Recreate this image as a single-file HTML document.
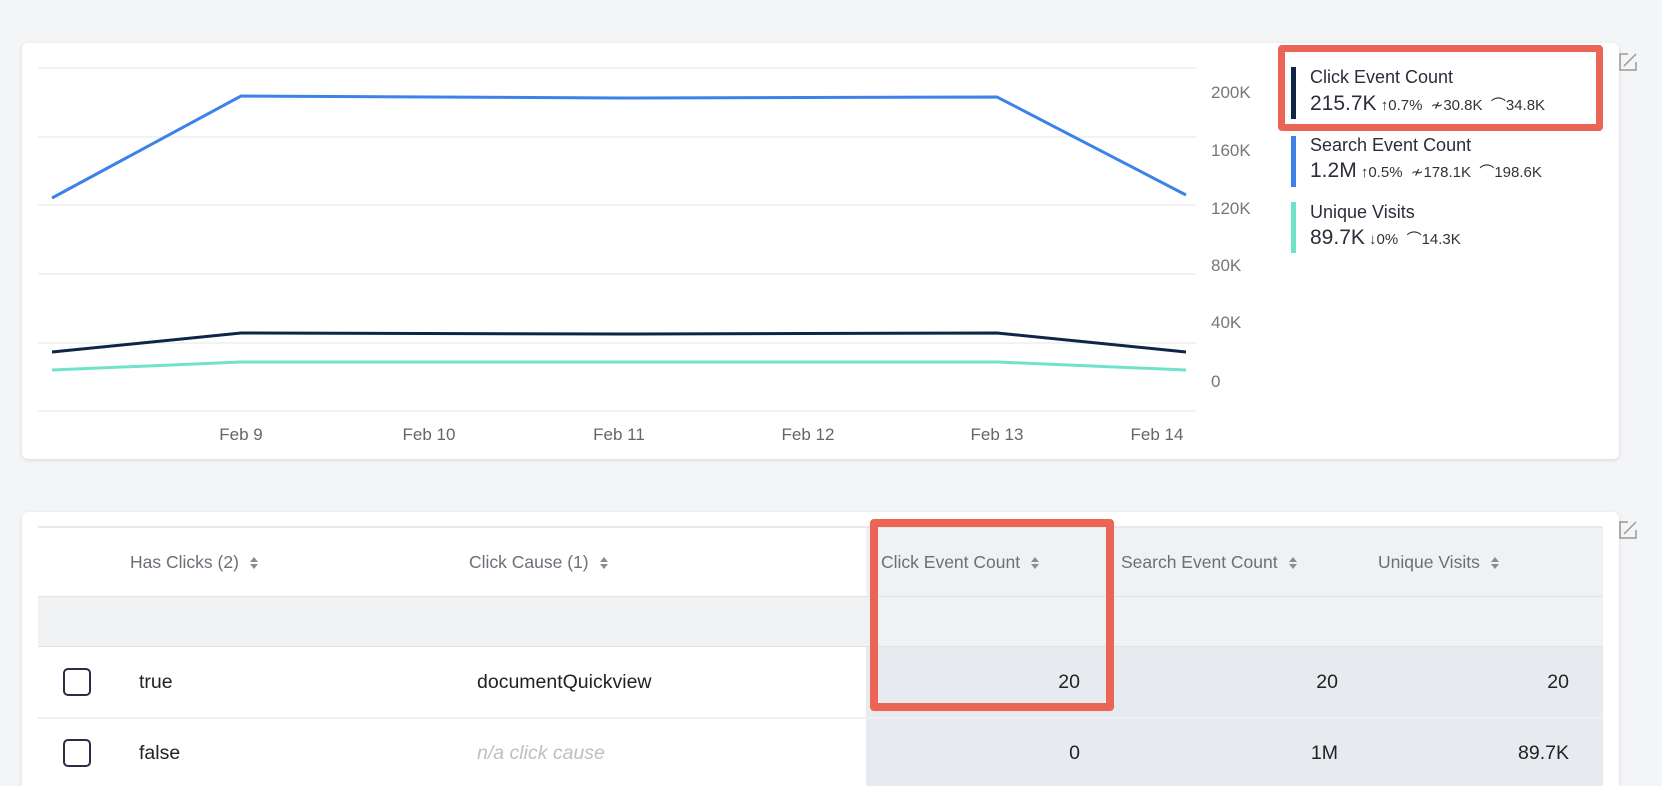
<!DOCTYPE html>
<html style="width:1662px;height:786px;overflow:hidden"><head><meta charset="utf-8"><style>
*{box-sizing:border-box;margin:0;padding:0}
body{width:1662px;height:786px;background:#f4f5f7;font-family:"Liberation Sans",sans-serif;position:relative;overflow:hidden;color:#333}
.card{position:absolute;background:#fff;border-radius:6px;box-shadow:0 1px 4px rgba(0,0,0,.12)}
.abs{position:absolute;white-space:nowrap}
.yl{position:absolute;left:1211px;font-size:17px;color:#777}
.xl{position:absolute;top:425px;font-size:17px;color:#666;transform:translateX(-50%)}
.lt{font-size:18px;color:#2a2d3a}
.lv{font-size:21px;color:#2a2d3a}
.ls{font-size:15px;color:#333}
.hd{position:absolute;top:552px;font-size:17.5px;color:#6b6f78}
.sort{display:inline-block;margin-left:10px;vertical-align:middle;width:10px}
.cell{position:absolute;font-size:19.5px;color:#222}
.cb{position:absolute;left:63px;width:28px;height:28px;border:2.5px solid #2b2c48;border-radius:5px}
</style></head><body>
<div class="card" style="left:22px;top:43px;width:1597px;height:416px"></div>
<svg class="abs" style="left:0;top:0" width="1662" height="786">
<g stroke="#eeeeee" stroke-width="1.5">
<line x1="38" y1="68" x2="1196" y2="68"/><line x1="38" y1="137" x2="1196" y2="137"/><line x1="38" y1="205" x2="1196" y2="205"/><line x1="38" y1="274" x2="1196" y2="274"/><line x1="38" y1="343" x2="1196" y2="343"/><line x1="38" y1="411" x2="1196" y2="411"/>
</g>
<polyline fill="none" stroke="#3c82e8" stroke-width="3" points="52,198 241,96 620,98 997,97 1186,195"/>
<polyline fill="none" stroke="#0e2548" stroke-width="3" points="52,352 241,333 620,334 997,333 1186,352"/>
<polyline fill="none" stroke="#6fe3c9" stroke-width="3" points="52,370 241,362 620,362 997,362 1186,370"/>
<g fill="none" stroke="#999" stroke-width="1.5"><path d="M1628 54h-8v16h16v-8M1624 66l12-12"/><path d="M1628 522h-8v16h16v-8M1624 534l12-12"/></g>
</svg>
<div class="yl" style="top:83px">200K</div><div class="yl" style="top:141px">160K</div><div class="yl" style="top:199px">120K</div><div class="yl" style="top:256px">80K</div><div class="yl" style="top:313px">40K</div><div class="yl" style="top:372px">0</div>
<div class="xl" style="left:241px">Feb 9</div><div class="xl" style="left:429px">Feb 10</div><div class="xl" style="left:619px">Feb 11</div><div class="xl" style="left:808px">Feb 12</div><div class="xl" style="left:997px">Feb 13</div><div class="xl" style="left:1157px">Feb 14</div>

<div class="abs" style="left:1278px;top:45px;width:325px;height:86px;border:7px solid #ec6455;border-radius:4px"></div>
<div class="abs" style="left:1291px;top:67px;width:5px;height:52px;background:#0e2548"></div>
<div class="abs lt" style="left:1310px;top:67px">Click Event Count</div>
<div class="abs" style="left:1310px;top:92px"><span class="lv">215.7K</span><span class="ls"> ↑0.7% &nbsp;≁30.8K &nbsp;⌒34.8K</span></div>
<div class="abs" style="left:1291px;top:136px;width:5px;height:51px;background:#3c82e8"></div>
<div class="abs lt" style="left:1310px;top:135px">Search Event Count</div>
<div class="abs" style="left:1310px;top:159px"><span class="lv">1.2M</span><span class="ls"> ↑0.5% &nbsp;≁178.1K &nbsp;⌒198.6K</span></div>
<div class="abs" style="left:1291px;top:202px;width:5px;height:51px;background:#6fe3c9"></div>
<div class="abs lt" style="left:1310px;top:202px">Unique Visits</div>
<div class="abs" style="left:1310px;top:226px"><span class="lv">89.7K</span><span class="ls"> ↓0% &nbsp;⌒14.3K</span></div>

<div class="card" style="left:22px;top:512px;width:1597px;height:274px;border-radius:6px 6px 0 0"></div>
<div class="abs" style="left:38px;top:526px;width:1565px;height:2px;background:#e8e9eb"></div>
<div class="abs" style="left:866px;top:528px;width:737px;height:68px;background:#f0f1f3"></div>
<div class="abs" style="left:38px;top:596px;width:1565px;height:1px;background:#e2e3e5"></div>
<div class="abs" style="left:38px;top:597px;width:1565px;height:49px;background:#f0f1f3"></div>
<div class="abs" style="left:38px;top:646px;width:1565px;height:1px;background:#e2e3e5"></div>
<div class="abs" style="left:866px;top:647px;width:737px;height:139px;background:#e7ebef"></div>
<div class="abs" style="left:38px;top:717px;width:1565px;height:2px;background:#eef0f2"></div>

<div class="hd" style="left:130px">Has Clicks (2)<svg class="sort" width="10" height="14"><path d="M5 1l4 5H1z M5 13l4-5H1z" fill="#8a8d94"/></svg></div>
<div class="hd" style="left:469px">Click Cause (1)<svg class="sort" width="10" height="14"><path d="M5 1l4 5H1z M5 13l4-5H1z" fill="#8a8d94"/></svg></div>
<div class="hd" style="left:881px">Click Event Count<svg class="sort" width="10" height="14"><path d="M5 1l4 5H1z M5 13l4-5H1z" fill="#8a8d94"/></svg></div>
<div class="hd" style="left:1121px">Search Event Count<svg class="sort" width="10" height="14"><path d="M5 1l4 5H1z M5 13l4-5H1z" fill="#8a8d94"/></svg></div>
<div class="hd" style="left:1378px">Unique Visits<svg class="sort" width="10" height="14"><path d="M5 1l4 5H1z M5 13l4-5H1z" fill="#8a8d94"/></svg></div>

<div class="cb" style="top:668px"></div><div class="cb" style="top:739px"></div>
<div class="cell" style="left:139px;top:671px">true</div>
<div class="cell" style="left:477px;top:671px">documentQuickview</div>
<div class="cell" style="left:139px;top:742px">false</div>
<div class="cell" style="left:477px;top:742px;color:#bcbfc4;font-style:italic">n/a click cause</div>
<div class="cell" style="right:582px;top:671px">20</div>
<div class="cell" style="right:324px;top:671px">20</div>
<div class="cell" style="right:93px;top:671px">20</div>
<div class="cell" style="right:582px;top:742px">0</div>
<div class="cell" style="right:324px;top:742px">1M</div>
<div class="cell" style="right:93px;top:742px">89.7K</div>

<div class="abs" style="left:870px;top:519px;width:244px;height:192px;border:8px solid #ec6455;border-radius:4px"></div>
</body></html>
